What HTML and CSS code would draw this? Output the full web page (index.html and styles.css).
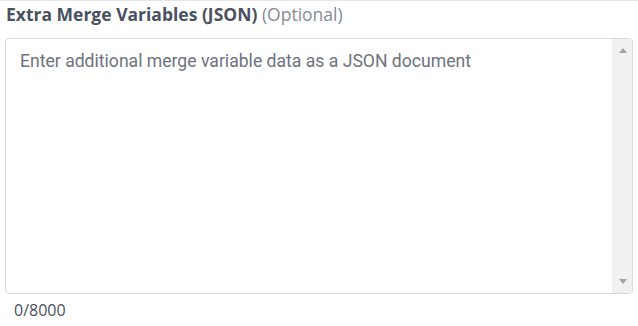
FILE: index.html
```html
<!DOCTYPE html>
<html lang="en">
<head>
    <meta charset="UTF-8">
    <meta name="viewport" content="width=device-width, initial-scale=1.0">
    <title>Extra Merge Variables</title>
    <link rel="stylesheet" href="styles.css">
</head>
<body>
    <div class="field">
        <label class="field-label" for="merge-vars">
            Extra Merge Variables (JSON) <span class="optional">(Optional)</span>
        </label>
        <div class="textarea-wrap">
            <textarea id="merge-vars" class="field-input" placeholder="Enter additional merge variable data as a JSON document"></textarea>
            <div class="scrollbar">
                <span class="arrow up"></span>
                <span class="arrow down"></span>
            </div>
        </div>
        <div class="counter">0/8000</div>
    </div>
</body>
</html>
```

FILE: styles.css
```css
* { margin: 0; padding: 0; box-sizing: border-box; }
body {
    font-family: 'Open Sans', sans-serif;
    background: #fff;
    color: #4a5160;
    width: 638px;
    height: 326px;
    overflow: hidden;
}
.field {
    border-top: 1px solid #e6e6e6;
    padding: 0 5px 0 5px;
}
.field-label {
    display: block;
    font-size: 17.5px;
    font-weight: 700;
    line-height: 26px;
    color: #4a5160;
    padding-left: 1px;
}
.optional {
    font-weight: 400;
    color: #868b95;
}
.textarea-wrap {
    position: relative;
    margin-top: 11px;
    height: 256px;
    border: 1px solid #dadada;
    border-radius: 4px;
    overflow: hidden;
}
.field-input {
    display: block;
    width: 100%;
    height: 100%;
    border: none;
    outline: none;
    resize: none;
    padding: 10px 40px 0 14px;
    font-family: 'Roboto', sans-serif;
    font-size: 17.6px;
    line-height: 24px;
    color: #4a5160;
    background: transparent;
}
.field-input::placeholder {
    color: #6e727d;
    opacity: 1;
}
.scrollbar {
    position: absolute;
    top: 0;
    right: 0;
    bottom: 0;
    width: 20px;
    background: #f1f1f1;
    border-left: 1px solid #ececec;
}
.arrow {
    position: absolute;
    left: 6px;
    width: 0;
    height: 0;
    border-left: 4px solid transparent;
    border-right: 4px solid transparent;
}
.arrow.up {
    top: 9px;
    border-bottom: 5px solid #a3a3a3;
}
.arrow.down {
    bottom: 9px;
    border-top: 5px solid #a3a3a3;
}
.counter {
    font-size: 16px;
    line-height: 20px;
    margin-top: 6px;
    padding-left: 9px;
    color: #4a5160;
}
```
